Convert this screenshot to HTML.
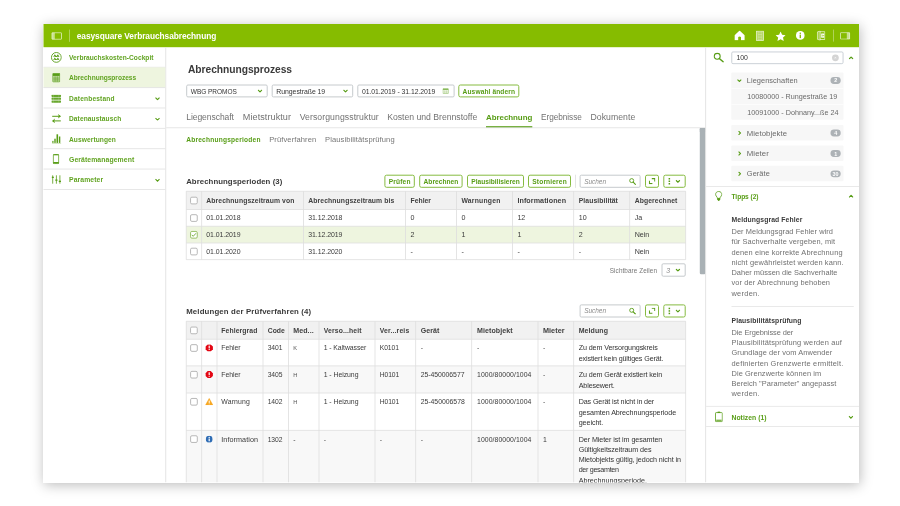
<!DOCTYPE html>
<html lang="de"><head><meta charset="utf-8"><title>easysquare Verbrauchsabrechnung</title>
<style>
html,body{margin:0;padding:0;background:#fff;}
body{width:900px;height:506px;position:relative;overflow:hidden;font-family:"Liberation Sans",sans-serif;}
.a{position:absolute;box-sizing:border-box;}
.t{position:absolute;white-space:nowrap;line-height:1;}
#clip{position:absolute;left:0;top:0;width:900px;height:506px;clip-path:inset(24px 41px 23.5px 43.3px);}
#root{position:absolute;left:0;top:0;width:900px;height:506px;will-change:transform;}
</style></head><body><div id="root"><div class="a" style="left:43.3px;top:24px;width:815.7px;height:458.5px;box-shadow:1px 2px 12px rgba(0,0,0,0.27);background:#fff"></div>
<div id="clip">
<svg class="a" style="left:0;top:0" width="900" height="506" viewBox="0 0 900 506">
<rect x="43.30" y="24.00" width="815.70" height="23.20" rx="0" fill="#86bc00"/>
<svg x="51.40" y="32.30" width="10.60" height="7.40" viewBox="0 0 106 74"><rect x="4" y="4" width="98" height="66" rx="6" fill="none" stroke="#fff" stroke-opacity=".85" stroke-width="8"/><rect x="4" y="4" width="30" height="66" fill="#fff" fill-opacity=".55"/></svg>
<rect x="69.10" y="29.60" width="0.70" height="12.20" rx="0" fill="rgba(255,255,255,.5)"/>
<svg x="734.20" y="30.40" width="10.80" height="10.00" viewBox="0 0 108 100"><path d="M54 2 L4 48 L4 98 L40 98 L40 66 Q54 56 68 66 L68 98 L104 98 L104 48 Z" fill="#fff"/></svg>
<svg x="755.80" y="30.50" width="8.40" height="10.60" viewBox="0 0 84 106"><rect x="6" y="6" width="72" height="94" fill="#fff" fill-opacity=".35" stroke="#fff" stroke-opacity=".75" stroke-width="8"/><path d="M22 6 V100 M62 6 V100" stroke="#fff" stroke-opacity=".5" stroke-width="5"/><path d="M24 24 H60 M24 40 H60 M24 56 H60 M24 72 H60 M24 88 H60" stroke="#fff" stroke-opacity=".55" stroke-width="6"/></svg>
<svg x="775.40" y="31.20" width="10.40" height="9.90" viewBox="0 0 112 106"><path d="M56 2 L72 38 L110 42 L82 68 L90 104 L56 86 L22 104 L30 68 L2 42 L40 38 Z" fill="#fff"/></svg>
<svg x="795.80" y="30.90" width="9.00" height="9.00" viewBox="0 0 92 92"><circle cx="46" cy="46" r="45" fill="#fff"/><rect x="39" y="38" width="14" height="36" fill="#86bc00"/><circle cx="46" cy="24" r="8" fill="#86bc00"/></svg>
<svg x="816.80" y="30.50" width="8.60" height="10.20" viewBox="0 0 86 102"><path d="M6 14 L34 5 V97 L6 88 Z" fill="#fff" fill-opacity=".3" stroke="#fff" stroke-opacity=".85" stroke-width="7"/><path d="M34 12 H80 V90 H34" fill="none" stroke="#fff" stroke-opacity=".8" stroke-width="8"/><rect x="44" y="30" width="30" height="42" fill="#fff"/><path d="M50 51 H68 M60 42 L69 51 L60 60" stroke="#86bc00" stroke-width="6" fill="none"/></svg>
<rect x="833.00" y="29.60" width="0.70" height="12.00" rx="0" fill="rgba(255,255,255,.5)"/>
<svg x="840.00" y="32.20" width="10.20" height="7.40" viewBox="0 0 102 74"><rect x="4" y="4" width="94" height="66" rx="6" fill="none" stroke="#fff" stroke-opacity=".85" stroke-width="8"/><rect x="68" y="4" width="30" height="66" fill="#fff" fill-opacity=".55"/></svg>
<rect x="165.30" y="47.20" width="0.90" height="435.30" rx="0" fill="#e2e2e2"/>
<rect x="43.30" y="66.81" width="122.00" height="0.90" rx="0" fill="#e4e4e4"/>
<rect x="43.30" y="67.36" width="122.00" height="20.36" rx="0" fill="#eef5df"/>
<rect x="43.30" y="87.17" width="122.00" height="0.90" rx="0" fill="#e4e4e4"/>
<rect x="43.30" y="107.53" width="122.00" height="0.90" rx="0" fill="#e4e4e4"/>
<svg x="155.00" y="97.10" width="5.00" height="3.40" viewBox="0 0 50 34"><path d="M5 6 L25 26 L45 6" fill="none" stroke="#589d16" stroke-width="11"/></svg>
<rect x="43.30" y="127.89" width="122.00" height="0.90" rx="0" fill="#e4e4e4"/>
<svg x="155.00" y="117.46" width="5.00" height="3.40" viewBox="0 0 50 34"><path d="M5 6 L25 26 L45 6" fill="none" stroke="#589d16" stroke-width="11"/></svg>
<rect x="43.30" y="148.25" width="122.00" height="0.90" rx="0" fill="#e4e4e4"/>
<rect x="43.30" y="168.61" width="122.00" height="0.90" rx="0" fill="#e4e4e4"/>
<rect x="43.30" y="188.97" width="122.00" height="0.90" rx="0" fill="#e4e4e4"/>
<svg x="155.00" y="178.54" width="5.00" height="3.40" viewBox="0 0 50 34"><path d="M5 6 L25 26 L45 6" fill="none" stroke="#589d16" stroke-width="11"/></svg>
<svg x="50.85" y="51.90" width="11.00" height="11.00" viewBox="0 0 110 110"><circle cx="55" cy="55" r="49" fill="none" stroke="#589d16" stroke-width="9"/><path d="M24 50 L39 24 L55 44 L71 24 L86 50 Z M24 82 L39 56 L55 76 L71 56 L86 82 Z" fill="#589d16"/><path d="M34 50 L44 50 L39 41 Z M66 50 L76 50 L71 41 Z M34 82 L44 82 L39 73 Z M66 82 L76 82 L71 73 Z" fill="#fff"/></svg>
<svg x="52.30" y="72.90" width="7.90" height="9.50" viewBox="0 0 79 95"><rect x="3" y="3" width="73" height="89" rx="10" fill="#589d16" fill-opacity=".35" stroke="#589d16" stroke-width="7"/><rect x="6" y="6" width="67" height="24" fill="#589d16"/><path d="M28 34 V88 M50 34 V88 M8 52 H71 M8 70 H71" stroke="#589d16" stroke-width="5"/></svg>
<svg x="51.30" y="94.60" width="9.80" height="8.30" viewBox="0 0 98 83"><g fill="#589d16" fill-opacity=".9"><rect x="1" y="1" width="96" height="22" rx="6"/><rect x="1" y="30" width="96" height="22" rx="6"/><rect x="1" y="59" width="96" height="22" rx="6"/></g><g fill="#fff" fill-opacity=".35"><rect x="20" y="1" width="4" height="80"/><rect x="74" y="1" width="4" height="80"/></g></svg>
<svg x="51.80" y="113.60" width="9.40" height="10.00" viewBox="0 0 94 100"><g stroke="#589d16" stroke-width="10" fill="none"><path d="M4 27 H84"/><path d="M90 73 H10"/></g><path d="M62 4 L92 27 L62 50 L70 27 Z M32 50 L2 73 L32 96 L24 73 Z" fill="#589d16"/></svg>
<svg x="51.90" y="134.10" width="9.40" height="9.60" viewBox="0 0 94 96"><g fill="#589d16"><rect x="4" y="68" width="12" height="20"/><rect x="24" y="46" width="14" height="42"/><rect x="46" y="2" width="16" height="86"/><rect x="70" y="24" width="14" height="64"/><rect x="0" y="90" width="94" height="6" fill-opacity=".55"/></g></svg>
<svg x="52.70" y="154.00" width="6.60" height="10.20" viewBox="0 0 66 102"><rect x="5" y="5" width="56" height="92" rx="10" fill="none" stroke="#589d16" stroke-width="9"/><rect x="5" y="80" width="56" height="14" fill="#589d16"/><rect x="5" y="5" width="56" height="8" fill="#589d16"/></svg>
<svg x="51.60" y="175.10" width="9.40" height="8.80" viewBox="0 0 94 88"><g stroke="#589d16" stroke-width="8" fill="none"><path d="M11 2 V86 M48 2 V86 M83 2 V86"/></g><g fill="#589d16"><rect x="0" y="16" width="22" height="13"/><rect x="37" y="44" width="22" height="13"/><rect x="72" y="56" width="22" height="13"/></g></svg>
<rect x="186.70" y="85.00" width="80.50" height="11.90" rx="1.2" fill="#fff" stroke="#c6cacd" stroke-width="1.0"/>
<svg x="257.50" y="89.35" width="5.00" height="3.40" viewBox="0 0 50 34"><path d="M5 6 L25 26 L45 6" fill="none" stroke="#589d16" stroke-width="11"/></svg>
<rect x="272.20" y="85.00" width="80.50" height="11.90" rx="1.2" fill="#fff" stroke="#c6cacd" stroke-width="1.0"/>
<svg x="343.00" y="89.35" width="5.00" height="3.40" viewBox="0 0 50 34"><path d="M5 6 L25 26 L45 6" fill="none" stroke="#589d16" stroke-width="11"/></svg>
<rect x="357.80" y="85.00" width="96.30" height="11.90" rx="1.2" fill="#fff" stroke="#c6cacd" stroke-width="1.0"/>
<svg x="442.50" y="88.10" width="6.30" height="5.80" viewBox="0 0 62 58"><g opacity=".7"><rect x="3" y="6" width="56" height="49" rx="4" fill="none" stroke="#589d16" stroke-width="6"/><rect x="3" y="6" width="56" height="14" fill="#589d16"/><path d="M22 22 V52 M40 22 V52 M6 32 H56 M6 43 H56" stroke="#589d16" stroke-width="4" stroke-opacity=".7"/></g></svg>
<rect x="458.80" y="85.00" width="60.00" height="11.90" rx="1.6" fill="#fff" stroke="#86bb40" stroke-width="1.0"/>
<rect x="486.00" y="126.20" width="46.30" height="1.50" rx="0" fill="#589d16"/>
<rect x="166.20" y="127.40" width="539.40" height="0.80" rx="0" fill="#e0e0e0"/>
<rect x="699.80" y="128.00" width="5.60" height="146.30" rx="1.2" fill="#a9b1b5"/>
<rect x="699.80" y="128.00" width="5.60" height="4.00" rx="0" fill="#a9b1b5"/>
<rect x="384.90" y="175.20" width="29.40" height="12.10" rx="1.6" fill="#fff" stroke="#86bb40" stroke-width="1.0"/>
<rect x="419.70" y="175.20" width="42.40" height="12.10" rx="1.6" fill="#fff" stroke="#86bb40" stroke-width="1.0"/>
<rect x="467.50" y="175.20" width="56.00" height="12.10" rx="1.6" fill="#fff" stroke="#86bb40" stroke-width="1.0"/>
<rect x="528.50" y="175.20" width="42.00" height="12.10" rx="1.6" fill="#fff" stroke="#86bb40" stroke-width="1.0"/>
<rect x="575.20" y="174.70" width="0.70" height="13.10" rx="0" fill="#d8d8d8"/>
<rect x="580.10" y="175.20" width="60.00" height="12.10" rx="1.2" fill="#fff" stroke="#c6cacd" stroke-width="1.0"/>
<svg x="629.00" y="177.90" width="7.00" height="7.00" viewBox="0 0 70 70"><circle cx="27" cy="27" r="20" fill="none" stroke="#589d16" stroke-width="9"/><path d="M42 42 L64 64" stroke="#589d16" stroke-width="11" stroke-linecap="round"/></svg>
<rect x="645.50" y="175.20" width="13.00" height="12.10" rx="1.6" fill="#fff" stroke="#86bb40" stroke-width="1.0"/>
<svg x="648.80" y="178.00" width="6.60" height="6.20" viewBox="0 0 66 62"><path d="M30 6 H60 V34 M36 56 H6 V28" fill="none" stroke="#589d16" stroke-width="11"/></svg>
<rect x="663.80" y="175.20" width="21.40" height="12.10" rx="1.6" fill="#fff" stroke="#86bb40" stroke-width="1.0"/>
<rect x="668.60" y="178.00" width="1.50" height="1.50" rx="0" fill="#589d16"/>
<rect x="668.60" y="180.50" width="1.50" height="1.50" rx="0" fill="#589d16"/>
<rect x="668.60" y="183.00" width="1.50" height="1.50" rx="0" fill="#589d16"/>
<svg x="675.40" y="179.65" width="5.00" height="3.40" viewBox="0 0 50 34"><path d="M5 6 L25 26 L45 6" fill="none" stroke="#589d16" stroke-width="11"/></svg>
<rect x="186.20" y="191.20" width="499.50" height="18.30" rx="0" fill="#f1f1f1"/>
<rect x="186.20" y="226.20" width="499.50" height="16.80" rx="0" fill="#eef5df"/>
<rect x="186.20" y="190.80" width="499.50" height="0.80" rx="0" fill="#dedede"/>
<rect x="186.20" y="209.10" width="499.50" height="0.80" rx="0" fill="#dedede"/>
<rect x="186.20" y="225.80" width="499.50" height="0.80" rx="0" fill="#dedede"/>
<rect x="186.20" y="242.60" width="499.50" height="0.80" rx="0" fill="#dedede"/>
<rect x="186.20" y="259.30" width="499.50" height="0.80" rx="0" fill="#dedede"/>
<rect x="185.80" y="191.20" width="0.80" height="68.50" rx="0" fill="#dedede"/>
<rect x="201.30" y="191.20" width="0.80" height="68.50" rx="0" fill="#dedede"/>
<rect x="303.20" y="191.20" width="0.80" height="68.50" rx="0" fill="#dedede"/>
<rect x="405.10" y="191.20" width="0.80" height="68.50" rx="0" fill="#dedede"/>
<rect x="456.00" y="191.20" width="0.80" height="68.50" rx="0" fill="#dedede"/>
<rect x="512.00" y="191.20" width="0.80" height="68.50" rx="0" fill="#dedede"/>
<rect x="573.30" y="191.20" width="0.80" height="68.50" rx="0" fill="#dedede"/>
<rect x="629.30" y="191.20" width="0.80" height="68.50" rx="0" fill="#dedede"/>
<rect x="685.30" y="191.20" width="0.80" height="68.50" rx="0" fill="#dedede"/>
<rect x="190.55" y="214.70" width="6.70" height="6.70" rx="1.3" fill="#fff" stroke="#b0b0b0" stroke-width="0.9"/>
<rect x="190.55" y="231.45" width="6.70" height="6.70" rx="1.3" fill="#fff" stroke="#8fba5a" stroke-width="0.9"/>
<svg x="191.20" y="232.50" width="5.40" height="4.60" viewBox="0 0 54 46"><path d="M5 23 L20 38 L49 7" fill="none" stroke="#589d16" stroke-width="8"/></svg>
<rect x="190.55" y="248.20" width="6.70" height="6.70" rx="1.3" fill="#fff" stroke="#b0b0b0" stroke-width="0.9"/>
<rect x="190.55" y="197.20" width="6.70" height="6.70" rx="1.3" fill="#fff" stroke="#b0b0b0" stroke-width="0.9"/>
<rect x="662.00" y="263.80" width="23.20" height="12.40" rx="1.2" fill="#fff" stroke="#c6cacd" stroke-width="1.0"/>
<svg x="675.40" y="268.40" width="5.00" height="3.40" viewBox="0 0 50 34"><path d="M5 6 L25 26 L45 6" fill="none" stroke="#589d16" stroke-width="11"/></svg>
<rect x="580.10" y="304.90" width="60.00" height="12.10" rx="1.2" fill="#fff" stroke="#c6cacd" stroke-width="1.0"/>
<svg x="629.00" y="307.60" width="7.00" height="7.00" viewBox="0 0 70 70"><circle cx="27" cy="27" r="20" fill="none" stroke="#589d16" stroke-width="9"/><path d="M42 42 L64 64" stroke="#589d16" stroke-width="11" stroke-linecap="round"/></svg>
<rect x="645.50" y="304.90" width="13.00" height="12.10" rx="1.6" fill="#fff" stroke="#86bb40" stroke-width="1.0"/>
<svg x="648.80" y="307.70" width="6.60" height="6.20" viewBox="0 0 66 62"><path d="M30 6 H60 V34 M36 56 H6 V28" fill="none" stroke="#589d16" stroke-width="11"/></svg>
<rect x="663.80" y="304.90" width="21.40" height="12.10" rx="1.6" fill="#fff" stroke="#86bb40" stroke-width="1.0"/>
<rect x="668.60" y="307.70" width="1.50" height="1.50" rx="0" fill="#589d16"/>
<rect x="668.60" y="310.20" width="1.50" height="1.50" rx="0" fill="#589d16"/>
<rect x="668.60" y="312.70" width="1.50" height="1.50" rx="0" fill="#589d16"/>
<svg x="675.40" y="309.35" width="5.00" height="3.40" viewBox="0 0 50 34"><path d="M5 6 L25 26 L45 6" fill="none" stroke="#589d16" stroke-width="11"/></svg>
<rect x="186.20" y="321.20" width="499.50" height="18.00" rx="0" fill="#f1f1f1"/>
<rect x="186.20" y="365.90" width="499.50" height="27.10" rx="0" fill="#f8f8f8"/>
<rect x="186.20" y="430.30" width="499.50" height="52.20" rx="0" fill="#f8f8f8"/>
<rect x="186.20" y="320.80" width="499.50" height="0.80" rx="0" fill="#dedede"/>
<rect x="186.20" y="338.80" width="499.50" height="0.80" rx="0" fill="#dedede"/>
<rect x="186.20" y="365.50" width="499.50" height="0.80" rx="0" fill="#dedede"/>
<rect x="186.20" y="392.60" width="499.50" height="0.80" rx="0" fill="#dedede"/>
<rect x="186.20" y="429.90" width="499.50" height="0.80" rx="0" fill="#dedede"/>
<rect x="185.80" y="321.20" width="0.80" height="161.30" rx="0" fill="#dedede"/>
<rect x="201.30" y="321.20" width="0.80" height="161.30" rx="0" fill="#dedede"/>
<rect x="216.60" y="321.20" width="0.80" height="161.30" rx="0" fill="#dedede"/>
<rect x="262.60" y="321.20" width="0.80" height="161.30" rx="0" fill="#dedede"/>
<rect x="288.10" y="321.20" width="0.80" height="161.30" rx="0" fill="#dedede"/>
<rect x="318.60" y="321.20" width="0.80" height="161.30" rx="0" fill="#dedede"/>
<rect x="374.60" y="321.20" width="0.80" height="161.30" rx="0" fill="#dedede"/>
<rect x="415.30" y="321.20" width="0.80" height="161.30" rx="0" fill="#dedede"/>
<rect x="471.30" y="321.20" width="0.80" height="161.30" rx="0" fill="#dedede"/>
<rect x="537.60" y="321.20" width="0.80" height="161.30" rx="0" fill="#dedede"/>
<rect x="573.30" y="321.20" width="0.80" height="161.30" rx="0" fill="#dedede"/>
<rect x="685.30" y="321.20" width="0.80" height="161.30" rx="0" fill="#dedede"/>
<rect x="190.55" y="327.05" width="6.70" height="6.70" rx="1.3" fill="#fff" stroke="#b0b0b0" stroke-width="0.9"/>
<rect x="190.60" y="344.65" width="6.70" height="6.70" rx="1.3" fill="#fff" stroke="#b0b0b0" stroke-width="0.9"/>
<svg x="205.30" y="344.20" width="7.80" height="7.40" viewBox="0 0 78 74"><path d="M24 2 H54 L76 24 V50 L54 72 H24 L2 50 V24 Z" fill="#e30613"/><rect x="33" y="14" width="12" height="28" rx="3" fill="#fff"/><rect x="33" y="48" width="12" height="11" rx="3" fill="#fff"/></svg>
<rect x="190.60" y="371.35" width="6.70" height="6.70" rx="1.3" fill="#fff" stroke="#b0b0b0" stroke-width="0.9"/>
<svg x="205.30" y="370.90" width="7.80" height="7.40" viewBox="0 0 78 74"><path d="M24 2 H54 L76 24 V50 L54 72 H24 L2 50 V24 Z" fill="#e30613"/><rect x="33" y="14" width="12" height="28" rx="3" fill="#fff"/><rect x="33" y="48" width="12" height="11" rx="3" fill="#fff"/></svg>
<rect x="190.60" y="398.45" width="6.70" height="6.70" rx="1.3" fill="#fff" stroke="#b0b0b0" stroke-width="0.9"/>
<svg x="205.20" y="398.10" width="8.00" height="7.20" viewBox="0 0 80 72"><path d="M40 2 L78 70 H2 Z" fill="#f7a823" stroke="#f7a823" stroke-width="3" stroke-linejoin="round"/><rect x="35" y="24" width="10" height="24" rx="3" fill="#fff"/><rect x="35" y="53" width="10" height="9" rx="3" fill="#fff"/></svg>
<rect x="190.60" y="435.75" width="6.70" height="6.70" rx="1.3" fill="#fff" stroke="#b0b0b0" stroke-width="0.9"/>
<svg x="205.70" y="435.70" width="7.00" height="7.00" viewBox="0 0 70 70"><circle cx="35" cy="35" r="34" fill="#2f6db5"/><rect x="29" y="29" width="12" height="26" rx="2" fill="#fff"/><circle cx="35" cy="17" r="7" fill="#fff"/></svg>
<rect x="705.20" y="47.20" width="0.90" height="435.30" rx="0" fill="#e2e2e2"/>
<svg x="713.10" y="52.30" width="11.00" height="10.40" viewBox="0 0 112 104"><circle cx="42" cy="40" r="30" fill="none" stroke="#589d16" stroke-width="11"/><path d="M66 64 L102 96" stroke="#589d16" stroke-width="15" stroke-linecap="round"/></svg>
<rect x="731.75" y="51.95" width="111.30" height="11.70" rx="1.2" fill="#fff" stroke="#c5ccd3" stroke-width="0.9"/>
<rect x="832.00" y="54.40" width="6.80" height="6.80" rx="3.4" fill="#d4d4d4"/>
<svg x="834.20" y="56.60" width="2.40" height="2.40" viewBox="0 0 22 22"><path d="M3 3 L19 19 M19 3 L3 19" stroke="#fff" stroke-width="5"/></svg>
<svg x="848.60" y="56.20" width="5.00" height="3.40" viewBox="0 0 50 34"><path d="M5 28 L25 8 L45 28" fill="none" stroke="#589d16" stroke-width="11"/></svg>
<rect x="731.30" y="72.50" width="112.20" height="47.30" rx="1" fill="#f7f7f7"/>
<svg x="737.00" y="79.00" width="4.80" height="3.20" viewBox="0 0 48 32"><path d="M5 6 L24 25 L43 6" fill="none" stroke="#589d16" stroke-width="11"/></svg>
<rect x="830.50" y="77.10" width="10.20" height="6.80" rx="3.4" fill="#adb2b6"/>
<rect x="731.30" y="88.40" width="112.20" height="0.70" rx="0" fill="#fff"/>
<rect x="731.30" y="104.40" width="112.20" height="0.70" rx="0" fill="#fff"/>
<rect x="731.30" y="125.00" width="112.20" height="15.50" rx="1" fill="#f7f7f7"/>
<svg x="738.00" y="130.60" width="3.20" height="4.80" viewBox="0 0 32 48"><path d="M6 5 L25 24 L6 43" fill="none" stroke="#589d16" stroke-width="11"/></svg>
<rect x="830.50" y="129.60" width="10.20" height="6.80" rx="3.4" fill="#adb2b6"/>
<rect x="731.30" y="145.50" width="112.20" height="15.50" rx="1" fill="#f7f7f7"/>
<svg x="738.00" y="151.10" width="3.20" height="4.80" viewBox="0 0 32 48"><path d="M6 5 L25 24 L6 43" fill="none" stroke="#589d16" stroke-width="11"/></svg>
<rect x="830.50" y="150.10" width="10.20" height="6.80" rx="3.4" fill="#adb2b6"/>
<rect x="731.30" y="165.80" width="112.20" height="15.50" rx="1" fill="#f7f7f7"/>
<svg x="738.00" y="171.40" width="3.20" height="4.80" viewBox="0 0 32 48"><path d="M6 5 L25 24 L6 43" fill="none" stroke="#589d16" stroke-width="11"/></svg>
<rect x="830.50" y="170.40" width="10.20" height="6.80" rx="3.4" fill="#adb2b6"/>
<rect x="706.10" y="186.00" width="153.40" height="0.80" rx="0" fill="#e4e4e4"/>
<svg x="715.00" y="191.00" width="7.40" height="10.20" viewBox="0 0 74 102"><path d="M37 5 C17 5 6 19 6 34 C6 46 14 53 20 61 C23 66 24 70 24 74 H50 C50 70 51 66 54 61 C60 53 68 46 68 34 C68 19 57 5 37 5 Z" fill="none" stroke="#589d16" stroke-width="8"/><rect x="22" y="72" width="30" height="18" fill="#589d16"/><rect x="29" y="90" width="16" height="9" fill="#589d16"/></svg>
<svg x="848.60" y="194.60" width="5.00" height="3.40" viewBox="0 0 50 34"><path d="M5 28 L25 8 L45 28" fill="none" stroke="#589d16" stroke-width="11"/></svg>
<rect x="731.50" y="306.00" width="122.30" height="0.80" rx="0" fill="#e4e4e4"/>
<rect x="706.10" y="405.90" width="153.40" height="0.80" rx="0" fill="#e4e4e4"/>
<svg x="715.00" y="411.20" width="7.80" height="11.00" viewBox="0 0 78 110"><rect x="5" y="14" width="68" height="91" rx="6" fill="none" stroke="#589d16" stroke-width="8"/><rect x="26" y="2" width="26" height="16" rx="3" fill="#589d16"/><rect x="12" y="84" width="54" height="16" fill="#589d16" fill-opacity=".75"/></svg>
<svg x="848.40" y="415.60" width="5.00" height="3.40" viewBox="0 0 50 34"><path d="M5 6 L25 26 L45 6" fill="none" stroke="#589d16" stroke-width="11"/></svg>
<rect x="706.10" y="426.20" width="153.40" height="0.80" rx="0" fill="#e4e4e4"/>
</svg>
<span class="t" style="left:76.80px;top:32.01px;font-size:8.33px;color:#fff;font-weight:700;letter-spacing:-0.056px;">easysquare Verbrauchsabrechnung</span>
<span class="t" style="left:69.00px;top:55.01px;font-size:6.60px;color:#62a422;font-weight:700;letter-spacing:0.041px;">Verbrauchskosten-Cockpit</span>
<span class="t" style="left:69.00px;top:75.01px;font-size:6.60px;color:#62a422;font-weight:700;letter-spacing:-0.013px;">Abrechnungsprozess</span>
<span class="t" style="left:69.00px;top:96.01px;font-size:6.60px;color:#62a422;font-weight:700;letter-spacing:0.172px;">Datenbestand</span>
<span class="t" style="left:69.00px;top:116.01px;font-size:6.60px;color:#62a422;font-weight:700;letter-spacing:0.097px;">Datenaustausch</span>
<span class="t" style="left:69.00px;top:137.01px;font-size:6.60px;color:#62a422;font-weight:700;letter-spacing:0.100px;">Auswertungen</span>
<span class="t" style="left:69.00px;top:157.01px;font-size:6.86px;color:#62a422;font-weight:700;letter-spacing:0.077px;">Gerätemanagement</span>
<span class="t" style="left:69.00px;top:177.00px;font-size:6.84px;color:#62a422;font-weight:700;letter-spacing:0.087px;">Parameter</span>
<span class="t" style="left:188.00px;top:65.01px;font-size:10.25px;color:#3a3a3a;font-weight:700;letter-spacing:-0.048px;">Abrechnungsprozess</span>
<span class="t" style="left:190.80px;top:89.01px;font-size:6.53px;color:#333;letter-spacing:-0.038px;">WBG PROMOS</span>
<span class="t" style="left:276.30px;top:89.00px;font-size:6.90px;color:#333;letter-spacing:-0.040px;">Rungestraße 19</span>
<span class="t" style="left:361.90px;top:89.00px;font-size:6.83px;color:#333;letter-spacing:-0.046px;">01.01.2019 - 31.12.2019</span>
<span class="t" style="left:462.60px;top:89.01px;font-size:6.60px;color:#589d16;font-weight:700;letter-spacing:0.112px;">Auswahl ändern</span>
<span class="t" style="left:186.20px;top:113.01px;font-size:8.54px;color:#727272;letter-spacing:-0.054px;">Liegenschaft</span>
<span class="t" style="left:242.80px;top:113.01px;font-size:9.08px;color:#727272;letter-spacing:0.071px;">Mietstruktur</span>
<span class="t" style="left:299.70px;top:113.01px;font-size:8.69px;color:#727272;letter-spacing:0.077px;">Versorgungsstruktur</span>
<span class="t" style="left:387.20px;top:113.01px;font-size:8.69px;color:#727272;letter-spacing:-0.018px;">Kosten und Brennstoffe</span>
<span class="t" style="left:486.00px;top:114.00px;font-size:7.95px;color:#589d16;font-weight:700;letter-spacing:-0.050px;">Abrechnung</span>
<span class="t" style="left:541.00px;top:114.01px;font-size:8.26px;color:#727272;letter-spacing:-0.053px;">Ergebnisse</span>
<span class="t" style="left:590.50px;top:113.01px;font-size:8.69px;color:#727272;letter-spacing:0.055px;">Dokumente</span>
<span class="t" style="left:186.20px;top:137.01px;font-size:6.60px;color:#589d16;font-weight:700;letter-spacing:0.220px;">Abrechnungsperioden</span>
<span class="t" style="left:269.20px;top:136.00px;font-size:7.56px;color:#767676;letter-spacing:0.105px;">Prüfverfahren</span>
<span class="t" style="left:325.00px;top:136.00px;font-size:7.56px;color:#767676;letter-spacing:0.103px;">Plausibilitätsprüfung</span>
<span class="t" style="left:186.20px;top:178.01px;font-size:7.80px;color:#3a3a3a;font-weight:700;letter-spacing:0.056px;">Abrechnungsperioden (3)</span>
<span class="t" style="left:388.70px;top:179.01px;font-size:6.60px;color:#589d16;font-weight:700;letter-spacing:0.182px;">Prüfen</span>
<span class="t" style="left:423.50px;top:179.01px;font-size:6.60px;color:#589d16;font-weight:700;letter-spacing:0.043px;">Abrechnen</span>
<span class="t" style="left:471.30px;top:179.01px;font-size:6.60px;color:#589d16;font-weight:700;letter-spacing:0.002px;">Plausibilisieren</span>
<span class="t" style="left:532.30px;top:179.01px;font-size:6.60px;color:#589d16;font-weight:700;letter-spacing:0.157px;">Stornieren</span>
<span class="t" style="left:584.30px;top:179.01px;font-size:6.48px;color:#8a8a8a;font-style:italic;letter-spacing:-0.051px;">Suchen</span>
<span class="t" style="left:206.30px;top:198.01px;font-size:6.80px;color:#414141;font-weight:700;letter-spacing:0.108px;">Abrechnungszeitraum von</span>
<span class="t" style="left:308.20px;top:198.01px;font-size:6.80px;color:#414141;font-weight:700;letter-spacing:0.120px;">Abrechnungszeitraum bis</span>
<span class="t" style="left:410.50px;top:198.01px;font-size:6.80px;color:#414141;font-weight:700;letter-spacing:0.019px;">Fehler</span>
<span class="t" style="left:461.40px;top:198.01px;font-size:6.80px;color:#414141;font-weight:700;letter-spacing:0.220px;">Warnungen</span>
<span class="t" style="left:517.40px;top:198.01px;font-size:7.15px;color:#414141;font-weight:700;letter-spacing:0.083px;">Informationen</span>
<span class="t" style="left:578.70px;top:198.01px;font-size:6.80px;color:#414141;font-weight:700;letter-spacing:0.087px;">Plausibilität</span>
<span class="t" style="left:634.70px;top:198.01px;font-size:6.80px;color:#414141;font-weight:700;letter-spacing:0.105px;">Abgerechnet</span>
<span class="t" style="left:206.30px;top:215.01px;font-size:6.93px;color:#3a3a3a;letter-spacing:-0.051px;">01.01.2018</span>
<span class="t" style="left:308.20px;top:215.01px;font-size:6.93px;color:#3a3a3a;letter-spacing:-0.051px;">31.12.2018</span>
<span class="t" style="left:410.50px;top:215.01px;font-size:7.10px;color:#3a3a3a;">0</span>
<span class="t" style="left:461.40px;top:215.01px;font-size:7.10px;color:#3a3a3a;">0</span>
<span class="t" style="left:517.40px;top:215.01px;font-size:7.10px;color:#3a3a3a;">12</span>
<span class="t" style="left:578.70px;top:215.01px;font-size:7.10px;color:#3a3a3a;">10</span>
<span class="t" style="left:634.70px;top:215.01px;font-size:7.10px;color:#3a3a3a;">Ja</span>
<span class="t" style="left:206.30px;top:232.01px;font-size:6.93px;color:#3a3a3a;letter-spacing:-0.051px;">01.01.2019</span>
<span class="t" style="left:308.20px;top:232.01px;font-size:6.93px;color:#3a3a3a;letter-spacing:-0.051px;">31.12.2019</span>
<span class="t" style="left:410.50px;top:232.01px;font-size:7.10px;color:#3a3a3a;">2</span>
<span class="t" style="left:461.40px;top:232.01px;font-size:7.10px;color:#3a3a3a;">1</span>
<span class="t" style="left:517.40px;top:232.01px;font-size:7.10px;color:#3a3a3a;">1</span>
<span class="t" style="left:578.70px;top:232.01px;font-size:7.10px;color:#3a3a3a;">2</span>
<span class="t" style="left:634.70px;top:232.01px;font-size:7.10px;color:#3a3a3a;">Nein</span>
<span class="t" style="left:206.30px;top:249.01px;font-size:6.93px;color:#3a3a3a;letter-spacing:-0.051px;">01.01.2020</span>
<span class="t" style="left:308.20px;top:249.01px;font-size:6.93px;color:#3a3a3a;letter-spacing:-0.051px;">31.12.2020</span>
<span class="t" style="left:410.50px;top:249.01px;font-size:7.10px;color:#3a3a3a;">-</span>
<span class="t" style="left:461.40px;top:249.01px;font-size:7.10px;color:#3a3a3a;">-</span>
<span class="t" style="left:517.40px;top:249.01px;font-size:7.10px;color:#3a3a3a;">-</span>
<span class="t" style="left:578.70px;top:249.01px;font-size:7.10px;color:#3a3a3a;">-</span>
<span class="t" style="left:634.70px;top:249.01px;font-size:7.10px;color:#3a3a3a;">Nein</span>
<span class="t" style="left:609.80px;top:268.01px;font-size:6.36px;color:#777;letter-spacing:0.082px;">Sichtbare Zeilen</span>
<span class="t" style="left:666.20px;top:267.00px;font-size:7.00px;color:#888;font-style:italic;">3</span>
<span class="t" style="left:186.20px;top:308.01px;font-size:7.80px;color:#3a3a3a;font-weight:700;letter-spacing:0.152px;">Meldungen der Prüfverfahren (4)</span>
<span class="t" style="left:584.30px;top:308.01px;font-size:6.48px;color:#8a8a8a;font-style:italic;letter-spacing:-0.051px;">Suchen</span>
<span class="t" style="left:221.30px;top:328.01px;font-size:6.80px;color:#414141;font-weight:700;letter-spacing:0.107px;">Fehlergrad</span>
<span class="t" style="left:267.70px;top:328.01px;font-size:6.80px;color:#414141;font-weight:700;letter-spacing:0.033px;">Code</span>
<span class="t" style="left:293.20px;top:328.01px;font-size:7.09px;color:#414141;font-weight:700;letter-spacing:0.087px;">Med...</span>
<span class="t" style="left:323.70px;top:328.01px;font-size:6.80px;color:#414141;font-weight:700;letter-spacing:0.149px;">Verso...heit</span>
<span class="t" style="left:379.70px;top:328.01px;font-size:6.80px;color:#414141;font-weight:700;letter-spacing:0.170px;">Ver...reis</span>
<span class="t" style="left:420.70px;top:327.01px;font-size:7.04px;color:#414141;font-weight:700;letter-spacing:0.081px;">Gerät</span>
<span class="t" style="left:477.00px;top:327.01px;font-size:7.07px;color:#414141;font-weight:700;letter-spacing:0.085px;">Mietobjekt</span>
<span class="t" style="left:542.90px;top:327.01px;font-size:7.26px;color:#414141;font-weight:700;letter-spacing:0.088px;">Mieter</span>
<span class="t" style="left:578.70px;top:327.01px;font-size:7.01px;color:#414141;font-weight:700;letter-spacing:0.086px;">Meldung</span>
<span class="t" style="left:221.30px;top:345.01px;font-size:6.89px;color:#3a3a3a;letter-spacing:-0.040px;">Fehler</span>
<span class="t" style="left:267.70px;top:345.00px;font-size:6.73px;color:#3a3a3a;letter-spacing:-0.051px;">3401</span>
<span class="t" style="left:293.20px;top:346.01px;font-size:5.72px;color:#555;">K</span>
<span class="t" style="left:323.70px;top:345.01px;font-size:6.89px;color:#3a3a3a;letter-spacing:-0.074px;">1 - Kaltwasser</span>
<span class="t" style="left:379.70px;top:345.01px;font-size:6.75px;color:#3a3a3a;letter-spacing:-0.058px;">K0101</span>
<span class="t" style="left:420.70px;top:345.01px;font-size:6.89px;color:#3a3a3a;">-</span>
<span class="t" style="left:477.00px;top:345.01px;font-size:6.89px;color:#3a3a3a;">-</span>
<span class="t" style="left:542.90px;top:345.01px;font-size:6.89px;color:#3a3a3a;">-</span>
<span class="t" style="left:578.70px;top:345.01px;font-size:7.16px;color:#333;letter-spacing:-0.111px;">Zu dem Versorgungskreis</span>
<span class="t" style="left:578.70px;top:356.01px;font-size:7.16px;color:#333;letter-spacing:-0.121px;">existiert kein gültiges Gerät.</span>
<span class="t" style="left:221.30px;top:372.01px;font-size:6.89px;color:#3a3a3a;letter-spacing:-0.040px;">Fehler</span>
<span class="t" style="left:267.70px;top:372.00px;font-size:6.73px;color:#3a3a3a;letter-spacing:-0.051px;">3405</span>
<span class="t" style="left:293.20px;top:373.01px;font-size:5.72px;color:#555;">H</span>
<span class="t" style="left:323.70px;top:372.01px;font-size:6.89px;color:#3a3a3a;letter-spacing:-0.037px;">1 - Heizung</span>
<span class="t" style="left:379.70px;top:372.00px;font-size:6.73px;color:#3a3a3a;letter-spacing:-0.053px;">H0101</span>
<span class="t" style="left:420.70px;top:372.01px;font-size:6.89px;color:#3a3a3a;letter-spacing:-0.051px;">25-450006577</span>
<span class="t" style="left:477.00px;top:372.01px;font-size:6.89px;color:#3a3a3a;letter-spacing:0.062px;">1000/80000/1004</span>
<span class="t" style="left:542.90px;top:372.01px;font-size:6.89px;color:#3a3a3a;">-</span>
<span class="t" style="left:578.70px;top:372.01px;font-size:7.16px;color:#333;letter-spacing:-0.093px;">Zu dem Gerät existiert kein</span>
<span class="t" style="left:578.70px;top:383.01px;font-size:7.16px;color:#333;letter-spacing:-0.129px;">Ablesewert.</span>
<span class="t" style="left:221.30px;top:399.01px;font-size:6.89px;color:#3a3a3a;letter-spacing:0.160px;">Warnung</span>
<span class="t" style="left:267.70px;top:399.00px;font-size:6.73px;color:#3a3a3a;letter-spacing:-0.051px;">1402</span>
<span class="t" style="left:293.20px;top:400.01px;font-size:5.72px;color:#555;">H</span>
<span class="t" style="left:323.70px;top:399.01px;font-size:6.89px;color:#3a3a3a;letter-spacing:-0.037px;">1 - Heizung</span>
<span class="t" style="left:379.70px;top:399.00px;font-size:6.73px;color:#3a3a3a;letter-spacing:-0.053px;">H0101</span>
<span class="t" style="left:420.70px;top:399.01px;font-size:6.89px;color:#3a3a3a;letter-spacing:-0.024px;">25-450006578</span>
<span class="t" style="left:477.00px;top:399.01px;font-size:6.89px;color:#3a3a3a;letter-spacing:0.062px;">1000/80000/1004</span>
<span class="t" style="left:542.90px;top:399.01px;font-size:6.89px;color:#3a3a3a;">-</span>
<span class="t" style="left:578.70px;top:399.01px;font-size:7.16px;color:#333;letter-spacing:-0.131px;">Das Gerät ist nicht in der</span>
<span class="t" style="left:578.70px;top:410.01px;font-size:7.16px;color:#333;letter-spacing:-0.061px;">gesamten Abrechnungsperiode</span>
<span class="t" style="left:578.70px;top:420.01px;font-size:7.16px;color:#333;letter-spacing:-0.068px;">geeicht.</span>
<span class="t" style="left:221.30px;top:436.00px;font-size:7.19px;color:#3a3a3a;letter-spacing:0.073px;">Information</span>
<span class="t" style="left:267.70px;top:437.00px;font-size:6.73px;color:#3a3a3a;letter-spacing:-0.051px;">1302</span>
<span class="t" style="left:293.20px;top:437.01px;font-size:6.89px;color:#3a3a3a;">-</span>
<span class="t" style="left:323.70px;top:437.01px;font-size:6.89px;color:#3a3a3a;">-</span>
<span class="t" style="left:379.70px;top:437.01px;font-size:6.89px;color:#3a3a3a;">-</span>
<span class="t" style="left:420.70px;top:437.01px;font-size:6.89px;color:#3a3a3a;">-</span>
<span class="t" style="left:477.00px;top:437.01px;font-size:6.89px;color:#3a3a3a;letter-spacing:0.062px;">1000/80000/1004</span>
<span class="t" style="left:542.90px;top:437.01px;font-size:6.89px;color:#3a3a3a;">1</span>
<span class="t" style="left:578.70px;top:437.01px;font-size:7.16px;color:#333;letter-spacing:-0.077px;">Der Mieter ist im gesamten</span>
<span class="t" style="left:578.70px;top:447.01px;font-size:7.16px;color:#333;letter-spacing:-0.072px;">Gültigkeitszeitraum des</span>
<span class="t" style="left:578.70px;top:457.01px;font-size:7.16px;color:#333;letter-spacing:-0.080px;">Mietobjekts gültig, jedoch nicht in</span>
<span class="t" style="left:578.70px;top:467.01px;font-size:7.16px;color:#333;letter-spacing:-0.315px;">der gesamten</span>
<span class="t" style="left:578.70px;top:478.01px;font-size:7.16px;color:#333;letter-spacing:0.014px;">Abrechnungsperiode.</span>
<span class="t" style="left:736.40px;top:55.01px;font-size:6.88px;color:#333;letter-spacing:-0.042px;">100</span>
<span class="t" style="left:746.80px;top:77.01px;font-size:7.42px;color:#6a6a6a;letter-spacing:0.050px;">Liegenschaften</span>
<span class="t" style="left:834.20px;top:78.00px;font-size:5.40px;color:#fff;font-weight:700;">2</span>
<span class="t" style="left:747.20px;top:93.01px;font-size:7.21px;color:#6a6a6a;letter-spacing:-0.005px;">10080000 - Rungestraße 19</span>
<span class="t" style="left:747.20px;top:109.01px;font-size:7.21px;color:#6a6a6a;letter-spacing:0.005px;">10091000 - Dohnany...ße 24</span>
<span class="t" style="left:746.80px;top:130.01px;font-size:7.72px;color:#6a6a6a;letter-spacing:0.072px;">Mietobjekte</span>
<span class="t" style="left:834.20px;top:131.00px;font-size:5.40px;color:#fff;font-weight:700;">4</span>
<span class="t" style="left:746.80px;top:150.00px;font-size:7.79px;color:#6a6a6a;letter-spacing:0.075px;">Mieter</span>
<span class="t" style="left:834.20px;top:152.00px;font-size:5.40px;color:#fff;font-weight:700;">1</span>
<span class="t" style="left:746.80px;top:170.01px;font-size:7.42px;color:#6a6a6a;letter-spacing:0.069px;">Geräte</span>
<span class="t" style="left:832.40px;top:172.00px;font-size:5.40px;color:#fff;font-weight:700;">30</span>
<span class="t" style="left:731.50px;top:194.01px;font-size:6.61px;color:#589d16;font-weight:700;letter-spacing:-0.053px;">Tipps (2)</span>
<span class="t" style="left:731.50px;top:217.01px;font-size:6.80px;color:#3a3a3a;font-weight:700;letter-spacing:0.115px;">Meldungsgrad Fehler</span>
<span class="t" style="left:731.50px;top:228.01px;font-size:7.42px;color:#707070;letter-spacing:0.069px;">Der Meldungsgrad Fehler wird</span>
<span class="t" style="left:731.50px;top:238.01px;font-size:7.42px;color:#707070;letter-spacing:0.091px;">für Sachverhalte vergeben, mit</span>
<span class="t" style="left:731.50px;top:249.01px;font-size:7.42px;color:#707070;letter-spacing:0.136px;">denen eine korrekte Abrechnung</span>
<span class="t" style="left:731.50px;top:259.01px;font-size:7.42px;color:#707070;letter-spacing:0.133px;">nicht gewährleistet werden kann.</span>
<span class="t" style="left:731.50px;top:269.01px;font-size:7.42px;color:#707070;letter-spacing:0.021px;">Daher müssen die Sachverhalte</span>
<span class="t" style="left:731.50px;top:279.01px;font-size:7.42px;color:#707070;letter-spacing:0.118px;">vor der Abrechnung behoben</span>
<span class="t" style="left:731.50px;top:290.01px;font-size:7.42px;color:#707070;letter-spacing:0.273px;">werden.</span>
<span class="t" style="left:731.50px;top:318.01px;font-size:6.80px;color:#3a3a3a;font-weight:700;letter-spacing:0.120px;">Plausibilitätsprüfung</span>
<span class="t" style="left:731.50px;top:329.01px;font-size:7.42px;color:#707070;letter-spacing:-0.071px;">Die Ergebnisse der</span>
<span class="t" style="left:731.50px;top:339.01px;font-size:7.42px;color:#707070;letter-spacing:0.171px;">Plausibilitätsprüfung werden auf</span>
<span class="t" style="left:731.50px;top:349.01px;font-size:7.42px;color:#707070;letter-spacing:0.092px;">Grundlage der vom Anwender</span>
<span class="t" style="left:731.50px;top:360.01px;font-size:7.42px;color:#707070;letter-spacing:0.200px;">definierten Grenzwerte ermittelt.</span>
<span class="t" style="left:731.50px;top:370.01px;font-size:7.42px;color:#707070;letter-spacing:0.088px;">Die Grenzwerte können im</span>
<span class="t" style="left:731.50px;top:380.01px;font-size:7.42px;color:#707070;letter-spacing:0.055px;">Bereich "Parameter" angepasst</span>
<span class="t" style="left:731.50px;top:390.01px;font-size:7.42px;color:#707070;letter-spacing:0.273px;">werden.</span>
<span class="t" style="left:731.50px;top:415.01px;font-size:6.80px;color:#589d16;font-weight:700;letter-spacing:0.025px;">Notizen (1)</span>
</div></div></body></html>
